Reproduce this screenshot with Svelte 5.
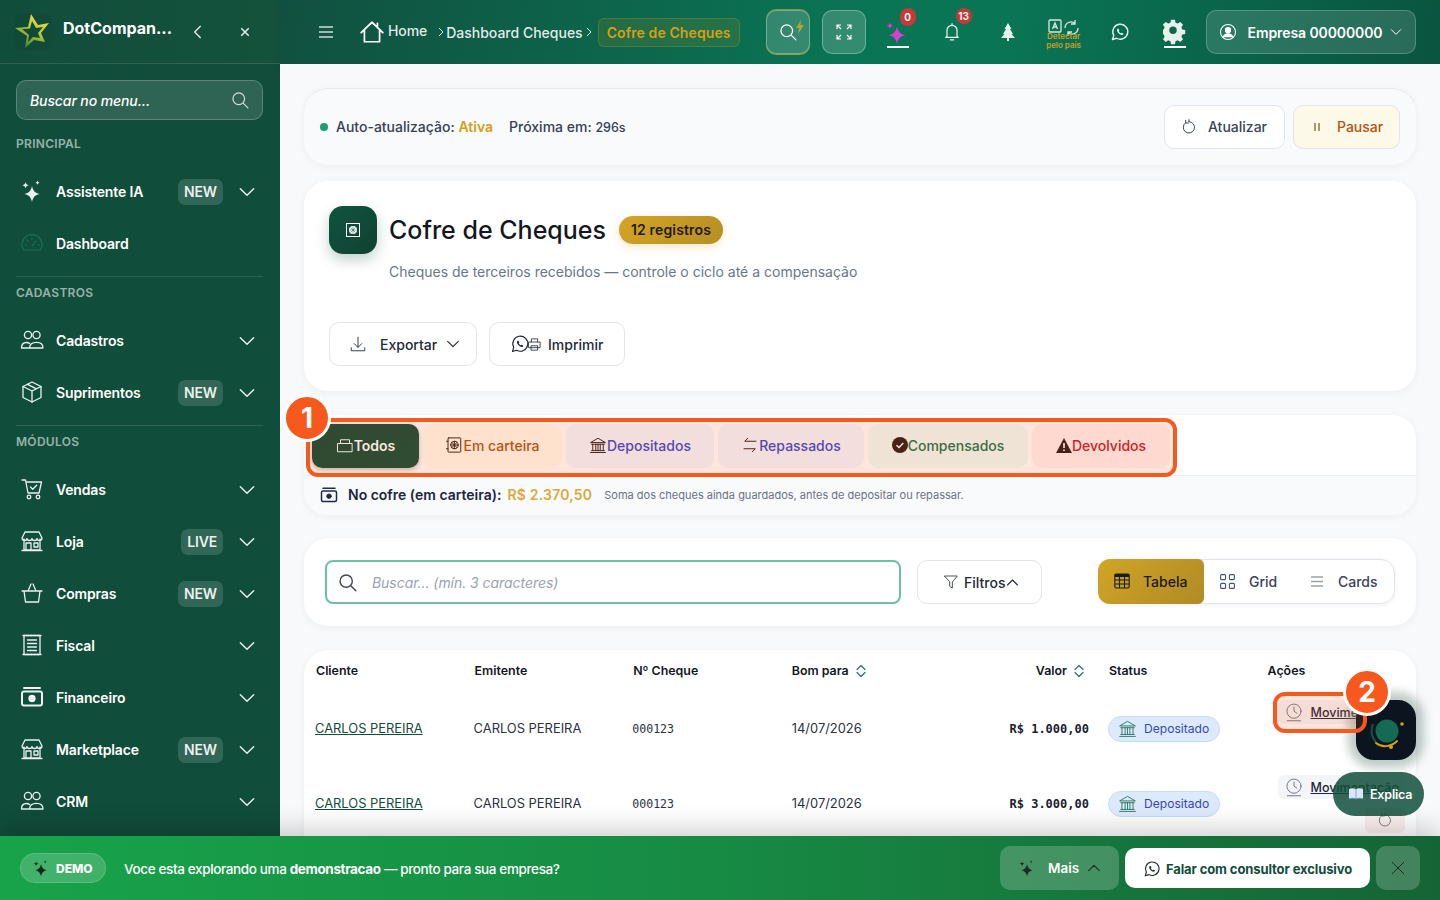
<script>
  const icons = {
    spark: '<path d="M12 7c1 4.700 3 7 7.500 8-4.500 1-6.500 3.300-7.500 8-1-4.700-3-7-7.500-8 4.500-1 6.500-3.300 7.500-8Z" fill="currentColor" stroke="none"/><path d="M5.500 3c.4 2 1.200 2.800 3.200 3.200-2 .4-2.800 1.200-3.200 3.200-.4-2-1.200-2.800-3.200-3.200 2-.4 2.800-1.200 3.200-3.200Z" fill="currentColor" stroke="none"/><path d="M17.500 1.500c.2 1.300.9 2 2.300 2.200-1.400.2-2.100.9-2.300 2.200-.2-1.300-.9-2-2.300-2.200 1.400-.2 2.100-.9 2.300-2.200Z" fill="currentColor" stroke="none"/>',
    gauge: '<path d="M3 18a10 10 0 1 1 18 0c-.4.7-1 1-1.800 1H4.800C4 19 3.400 18.700 3 18Z"/><path d="m12 15 4-5M5 14h1.500M18 14h1.500M12 7V8.500M7 9l1 1"/>',
    people: '<circle cx="8" cy="7" r="3.600"/><circle cx="16.500" cy="7" r="3.600"/><path d="M1.500 20c0-3.300 2-5.500 5-5.500 1.200 0 2.200.3 3 1M2 20h8M9.500 20c.2-3.500 3-5.700 7-5.700s6.500 2.200 6.500 5.700Z"/>',
    box: '<path d="m12 2 9 4.500v11L12 22l-9-4.500v-11Z"/><path d="m3 6.500 9 4.500 9-4.500M12 11v11M7.500 4.300l9 4.500"/>',
    cart: '<path d="M2 3h3.500L8 16h11l2.500-11H6"/><circle cx="9" cy="20" r="1.800"/><circle cx="18" cy="20" r="1.800"/><path d="m10.500 10 2.200 2.200 4-4"/>',
    store: '<path d="M4 10v11h16V10M2 21.500h20M5 3h14l3 6c0 1.500-1 2.500-2.500 2.500S17 10.500 17 9.500c0 1-1 2-2.500 2S12 10.500 12 9.500c0 1-1 2-2.500 2S7 10.500 7 9.500c0 1-1 2-2.500 2S2 10.500 2 9ZM6 14h5v7H6ZM14 14h4v4h-4Z"/>',
    basket: '<path d="M2 10h20M4 10l1.500 11h13L20 10M8 10l3-7M16 10l-3-7"/>',
    receipt: '<path d="M4 2.500h16v19H4Z"/><path d="M7.500 7h9M7.500 10.500h9M7.500 14h9M7.500 17.500h9"/><path d="M3 2.500h18M3 21.500h18" stroke-dasharray="2 1.500"/>',
    money: '<rect x="2" y="6.500" width="20" height="14" rx="2" stroke-width="2"/><circle cx="12" cy="13.500" r="3" fill="currentColor"/><path d="M4 3h16" stroke-width="2"/>',
    search: '<circle cx="10.500" cy="10.500" r="7"/><path d="m16 16 5.500 5.500"/>',
    home: '<path d="M2 12.500 12 3l10 9.500M5 10v11h14V10M17 4v3"/>',
    clock: '<circle cx="12" cy="11" r="8.500"/><path d="M12 6v5l3.500 2.500M4 22.500h16"/>',
    bank: '<path d="M2.500 8.500 12 3l9.500 5.500ZM3.500 11h17M5 11v8M9 11v8M12 11v8M15 11v8M19 11v8M3.500 19.500h17M2 22h20"/>',
    swap: '<path d="M20 7H5l4-4M4 17h15l-4 4"/>',
    chest: '<path d="M2.500 10h19v11h-19ZM6 10V5h12v5"/>',
    safe: '<rect x="4" y="2.500" width="17" height="19" rx="1"/><circle cx="12.500" cy="12" r="5"/><path d="M12.500 7v10M7.500 12h10M9 8.500l7 7M16 8.500l-7 7M2 7h2M2 17h2"/>',
    bell: '<path d="M6 17V10a6 6 0 1 1 12 0v7l1.500 1.500h-15ZM10 21.500h4M12 2v2"/>',
    wa: '<path d="M3 21l1.500-5A9 9 0 1 1 8 19.500Z"/><path d="M9 8c-1 1-.8 2.700.5 4.500s3.200 3 4.700 3c1 0 1.800-.7 1.800-1.500l-2-1.200-1 .8c-1-.4-2-1.400-2.500-2.600l.8-1L10 8Z" fill="currentColor" stroke="none"/>',
    user: '<circle cx="12" cy="12" r="10"/><circle cx="12" cy="9.500" r="3.500" fill="currentColor"/><path d="M5.500 19c1-3 3.500-4.500 6.500-4.500s5.500 1.500 6.500 4.500" fill="currentColor"/>',
    down: '<path d="M12 3v13M7 11.500l5 5 5-5M3 17v4h18v-4"/>',
    print: '<path d="M7 8V3h10v5M3 8h18v9H3ZM7 14h10v7H7Z"/>',
    funnel: '<path d="M2.500 3h19l-7.500 9v9l-4-2.500V12Z"/>',
    refresh: '<path d="M7 5.500a8.500 8.500 0 1 0 5-1.500M12 1v3M7 2v4h4"/>'
  };

  const chev = 'm4 8 8 8 8-8';

  const nav = [
    { section: 'PRINCIPAL' },
    { label: 'Assistente IA', icon: 'spark', tag: 'NEW' },
    { label: 'Dashboard', icon: 'gauge', dim: true, noChev: true },
    { section: 'CADASTROS', line: true },
    { label: 'Cadastros', icon: 'people' },
    { label: 'Suprimentos', icon: 'box', tag: 'NEW' },
    { section: 'MÓDULOS', line: true },
    { label: 'Vendas', icon: 'cart' },
    { label: 'Loja', icon: 'store', tag: 'LIVE' },
    { label: 'Compras', icon: 'basket', tag: 'NEW' },
    { label: 'Fiscal', icon: 'receipt' },
    { label: 'Financeiro', icon: 'money' },
    { label: 'Marketplace', icon: 'store', tag: 'NEW' },
    { label: 'CRM', icon: 'people' }
  ];

  const tabs = [
    { label: 'Todos', icon: 'chest', cls: 'todos' },
    { label: 'Em carteira', icon: 'safe', cls: 'carteira' },
    { label: 'Depositados', icon: 'bank', cls: 'depositados' },
    { label: 'Repassados', icon: 'swap', cls: 'repassados' },
    { label: 'Compensados', icon: 'check', cls: 'compensados' },
    { label: 'Devolvidos', icon: 'warn', cls: 'devolvidos' }
  ];

  const rows = [
    { cliente: 'CARLOS PEREIRA', emitente: 'CARLOS PEREIRA', numero: '000123', data: '14/07/2026', valor: 'R$ 1.000,00' },
    { cliente: 'CARLOS PEREIRA', emitente: 'CARLOS PEREIRA', numero: '000123', data: '14/07/2026', valor: 'R$ 3.000,00' }
  ];
</script>

{#snippet icon(name, size = 24, sw = 1.6)}
  <svg class="ico" width={size} height={size} viewBox="0 0 24 24" fill="none" stroke="currentColor" stroke-width={sw} stroke-linecap="round" stroke-linejoin="round">{@html icons[name]}</svg>
{/snippet}

{#snippet chevron(size = 18, up = false)}
  <svg class="ico" width={size} height={size} viewBox="0 0 24 24" fill="none" stroke="currentColor" stroke-width="1.700" stroke-linecap="round" stroke-linejoin="round"><path d={up ? 'm4 16 8-8 8 8' : chev} /></svg>
{/snippet}

{#snippet sortIcon()}
  <svg class="ico sort" width="12" height="14" viewBox="0 0 12 14" fill="none" stroke="currentColor" stroke-width="1.200" stroke-linecap="round" stroke-linejoin="round"><path d="M2 5.500 6 1.500l4 4M2 8.500l4 4 4-4" /></svg>
{/snippet}

<div class="app">
  <div class="shell">
    <aside class="sidebar">
      <div class="brand">
        <svg class="logo" width="38" height="38" viewBox="0 0 38 38">
          <defs>
            <linearGradient id="lg" x1="0.200" y1="1" x2="0.700" y2="0">
              <stop offset="0" stop-color="#2e7a3e" />
              <stop offset="0.550" stop-color="#b8c93a" />
              <stop offset="1" stop-color="#f0dc3c" />
            </linearGradient>
          </defs>
          <path fill="url(#lg)" fill-rule="evenodd" d="M17 1 24 12 35 10 27 20 31 29 20 27 11 35 13 23 1 15 14 14ZM18 8 16 15.500 8 16 15 22 14 29 19 24 26 25 24 20 29 14 22 15Z" />
        </svg>
        <span class="brand-name">DotCompan...</span>
        <svg class="ico back" width="16" height="16" viewBox="0 0 24 24" fill="none" stroke="currentColor" stroke-width="2"><path d="M16 3 7 12l9 9" /></svg>
        <svg class="ico close" width="10" height="10" viewBox="0 0 24 24" fill="none" stroke="currentColor" stroke-width="3.500"><path d="M3 3l18 18M21 3 3 21" /></svg>
      </div>

      <div class="side-body">
        <div class="menu-search">
          <span>Buscar no menu...</span>
          {@render icon('search', 20, 1.400)}
        </div>

        {#each nav as item}
          {#if item.section}
            {#if item.line}<hr class="rule" />{/if}
            <div class="section" class:first={!item.line}>{item.section}</div>
          {:else}
            <div class="nav-item">
              <span class="nav-ico" class:dim={item.dim}>{@render icon(item.icon, 24, item.dim ? 1.200 : 1.300)}</span>
              <span class="nav-label">{item.label}</span>
              {#if item.tag}<span class="tag">{item.tag}</span>{/if}
              {#if !item.noChev}<span class="nav-chev">{@render chevron(20)}</span>{/if}
            </div>
          {/if}
        {/each}
      </div>
    </aside>

    <div class="main">
      <header class="topbar">
        <svg class="ico burger" width="14" height="12" viewBox="0 0 14 12" stroke="currentColor" stroke-width="1.300"><path d="M0 1h14M0 6h14M0 11h14" /></svg>
        <span class="house">{@render icon('home', 26, 1.600)}</span>
        <span class="crumb home">Home</span>
        <span class="crumb-sep first">
          <svg class="ico" width="8" height="10" viewBox="0 0 8 10" fill="none" stroke="currentColor"><path d="m2 1 4 4-4 4" /></svg>
        </span>
        <span class="crumb">Dashboard Cheques</span>
        <span class="crumb-sep">
          <svg class="ico" width="8" height="10" viewBox="0 0 8 10" fill="none" stroke="currentColor"><path d="m2 1 4 4-4 4" /></svg>
        </span>
        <span class="crumb-current">Cofre de Cheques</span>

        <button class="square glow">
          {@render icon('search', 20, 1.500)}
          <svg class="bolt" width="8" height="14" viewBox="0 0 8 14"><path d="M5 0 0 8h3l-1 6 6-9H4.500Z" fill="#a5a83a" /></svg>
        </button>
        <button class="square second">
          <svg class="ico" width="18" height="18" viewBox="0 0 18 18" fill="none" stroke="currentColor" stroke-width="1.200"><path d="M2 6V2h4M2 2l4 4M16 6V2h-4M16 2l-4 4M2 12v4h4M2 16l4-4M16 12v4h-4M16 16l-4-4" /></svg>
        </button>

        <span class="slot first-slot">
          <svg class="ico magenta" width="26" height="26" viewBox="0 0 24 24">{@html icons.spark}</svg>
          <i class="bar"></i>
          <b class="count zero">0</b>
        </span>
        <span class="slot">
          {@render icon('bell', 20, 1.500)}
          <b class="count">13</b>
        </span>
        <span class="slot">
          <svg class="ico" width="14" height="18" viewBox="0 0 14 18" fill="currentColor"><path d="M7 0 10.500 6H9l3 5h-1.500L14 15H8v3H6v-3H0l3.500-4H2l3-5H3.500Z" /></svg>
        </span>
        <span class="slot translate">
          <svg class="ico" width="32" height="18" viewBox="0 0 32 18" fill="none" stroke="currentColor" stroke-width="1.300"><rect x="1" y="1" width="12" height="12" rx="1" /><path d="m4.500 10 2.500-6 2.500 6M5.500 8h3" /><path d="M17 9a6 6 0 0 1 10-4.500M30 9a6 6 0 0 1-10 4.500M27 1v4h-4M20 17v-4h4" /></svg>
          <em>Detectar<br />pelo país</em>
        </span>
        <span class="slot">{@render icon('wa', 20, 1.700)}</span>
        <span class="slot">
          <svg class="ico" width="26" height="26" viewBox="0 0 24 24" fill="currentColor" fill-rule="evenodd"><path d="m10 1.500h4l.6 3 2.200.9 2.600-1.700 2.800 2.800-1.700 2.600.9 2.200 3 .6v4l-3 .6-.9 2.200 1.700 2.600-2.800 2.800-2.600-1.700-2.200.9-.6 3h-4l-.6-3-2.200-.9-2.600 1.700-2.800-2.800 1.700-2.600-.9-2.200-3-.6v-4l3-.6.9-2.200-1.700-2.600 2.800-2.800 2.600 1.700 2.200-.9ZM12 8.500a3.800 3.800 0 1 0 0 7.600 3.800 3.800 0 0 0 0-7.600Z" transform="translate(-1.700 -.7) scale(.91)" /></svg>
          <i class="bar"></i>
        </span>

        <button class="company">
          {@render icon('user', 18, 1.400)}
          <span>Empresa 00000000</span>
          {@render chevron(14)}
        </button>
      </header>

      <main class="content">
        <section class="card refresh">
          <i class="dot"></i>
          <span class="auto">Auto-atualização: <b>Ativa</b></span>
          <span class="next">Próxima em: <span class="secs">296s</span></span>
          <button class="btn update">{@render icon('refresh', 16, 1.500)}<span>Atualizar</span></button>
          <button class="btn pause">
            <svg class="ico" width="8" height="10" viewBox="0 0 8 10" stroke="#6f5a1d" stroke-width="1.200"><path d="M2 1v8M6 1v8" /></svg>
            <span>Pausar</span>
          </button>
        </section>

        <section class="card title-card">
          <div class="title-row">
            <span class="title-ico">
              <svg width="16" height="16" viewBox="0 0 16 16" fill="none"><rect x="1.500" y="1.500" width="13" height="13" stroke="#fff" /><circle cx="8" cy="8" r="4" fill="#fff" /><path d="M8 4.500v7M4.500 8h7M5.500 5.500l5 5M10.500 5.500l-5 5" stroke="#114d3b" stroke-width=".5" /></svg>
            </span>
            <h1>Cofre de Cheques</h1>
            <span class="count-pill">12 registros</span>
          </div>
          <p class="subtitle">Cheques de terceiros recebidos — controle o ciclo até a compensação</p>
          <div class="title-actions">
            <button class="btn export">{@render icon('down', 18, 1.200)}<span>Exportar</span><span class="export-chev">{@render chevron(16)}</span></button>
            <button class="btn printbtn">
              <span class="pair">{@render icon('wa', 20, 1.400)}<span class="pair-print">{@render icon('print', 15, 1.300)}</span></span>
              <span>Imprimir</span>
            </button>
          </div>
        </section>

        <section class="card tabs-card">
          <div class="tabs">
            {#each tabs as t}
              <button class="tab {t.cls}">
                {#if t.icon === 'check'}
                  <svg class="ico" width="16" height="16" viewBox="0 0 16 16"><circle cx="8" cy="8" r="8" fill="#2a1a17" /><path d="m4.500 8.200 2.500 2.300 4.300-4.500" fill="none" stroke="#fff" stroke-width="1.500" /></svg>
                {:else if t.icon === 'warn'}
                  <svg class="ico warn" width="16" height="15" viewBox="0 0 16 15"><path d="M8 0 16 15H0Z" fill="#2a1a17" /><path d="M8 5v5M8 11.500v1.500" stroke="#fff" stroke-width="1.600" /></svg>
                {:else}
                  <span class="tab-ico">{@render icon(t.icon, 18, 1.300)}</span>
                {/if}
                <span>{t.label}</span>
              </button>
            {/each}
          </div>
          <div class="summary">
            <span class="sum-ico">{@render icon('money', 18, 1.200)}</span>
            <strong>No cofre (em carteira):</strong>
            <span class="amount">R$ 2.370,50</span>
            <small>Soma dos cheques ainda guardados, antes de depositar ou repassar.</small>
          </div>
          <div class="spot spot-one"></div>
          <span class="marker marker-one">1</span>
        </section>

        <section class="card filters">
          <div class="search-box">
            {@render icon('search', 21, 1.600)}
            <span>Buscar... (mín. 3 caracteres)</span>
          </div>
          <button class="btn filter">{@render icon('funnel', 16, 1.200)}<span>Filtros</span><span class="filter-chev">{@render chevron(15, true)}</span></button>
          <div class="views">
            <span class="view active">
              <svg class="ico" width="16" height="16" viewBox="0 0 16 16" fill="none" stroke="#1c1c1c" stroke-width="1.100"><rect x=".8" y="1" width="14.400" height="14" rx="1.500" /><path d="M.8 2.500h14.400" stroke-width="3" /><path d="M.8 7h14.400M.8 11h14.400M5.500 3v12M10.500 3v12" /></svg>
              Tabela
            </span>
            <span class="view grid">
              <svg class="ico" width="15" height="15" viewBox="0 0 15 15" fill="none" stroke="#4a5468" stroke-width="1.100"><rect x=".6" y=".6" width="5" height="5" rx="1" /><rect x="9.400" y=".6" width="5" height="5" rx="1" /><rect x=".6" y="9.400" width="5" height="5" rx="1" /><rect x="9.400" y="9.400" width="5" height="5" rx="1" /></svg>
              Grid
            </span>
            <span class="view cards">
              <svg class="ico" width="12" height="11" viewBox="0 0 12 11" stroke="#9aa0ac" stroke-width="1.400"><path d="M0 1h12M0 5.500h12M0 10h12" /></svg>
              Cards
            </span>
          </div>
        </section>

        <section class="card table-card">
          <div class="thead">
            <span>Cliente</span>
            <span>Emitente</span>
            <span>Nº Cheque</span>
            <span class="sorted">Bom para {@render sortIcon()}</span>
            <span class="sorted right">Valor {@render sortIcon()}</span>
            <span>Status</span>
            <span>Ações</span>
          </div>
          {#each rows as r}
            <div class="trow">
              <a class="client" href="#cliente">{r.cliente}</a>
              <span class="nudge">{r.emitente}</span>
              <span class="num nudge">{r.numero}</span>
              <span>{r.data}</span>
              <span class="valor">{r.valor}</span>
              <span class="nudge"><span class="status">{@render icon('bank', 19, 1.100)}<span>Depositado</span></span></span>
              <div class="acts">
                <span class="act-move">{@render icon('clock', 20, 1)}<u>Movimentação</u></span>
                <span class="act-undo">{@render icon('refresh', 16, 1)}</span>
              </div>
            </div>
          {/each}
        </section>
      </main>
    </div>
  </div>

  <footer class="demo">
    <span class="demo-pill">
      <span class="demo-spark">{@render icon('spark', 18, 1)}</span>
      DEMO
    </span>
    <p>Voce esta explorando uma <b>demonstracao</b> — pronto para sua empresa?</p>
    <button class="more"><span class="demo-spark">{@render icon('spark', 18, 1)}</span><span class="more-text">Mais</span>{@render chevron(16, true)}</button>
    <button class="talk">{@render icon('wa', 18, 1.500)}<span>Falar com consultor exclusivo</span></button>
    <button class="dismiss">
      <svg width="14" height="14" viewBox="0 0 14 14" stroke="#1f2d27" stroke-width="1"><path d="m1 1 12 12M13 1 1 13" /></svg>
    </button>
  </footer>

  <div class="spot spot-two"></div>
  <div class="mascot">
    <svg width="60" height="60" viewBox="0 0 60 60" fill="none">
      <circle cx="31" cy="31" r="11.500" fill="#156a55" />
      <path d="M17 24a16 16 0 0 0 3 18" stroke="#12584a" stroke-width="2" />
      <path d="M20 43c6 5 15 4 21-2" stroke="#d4a017" stroke-width="2" stroke-linecap="round" />
      <circle cx="35" cy="47" r="2" fill="#d4a017" />
      <circle cx="46" cy="24" r="1.800" fill="#d4a017" />
    </svg>
  </div>
  <span class="marker marker-two">2</span>
  <div class="explica">
    <svg width="14" height="12" viewBox="0 0 14 12"><path d="M0 1c2-1 5-1 7 0 2-1 5-1 7 0v10c-2-1-5-1-7 0-2-1-5-1-7 0Z" fill="#dce6f5" /><path d="M7 1v10" stroke="#7aa5d8" /><path d="M0 11c2-1 5-1 7 0 2-1 5-1 7 0" stroke="#5a8fd0" fill="none" /></svg>
    <span>Explica</span>
  </div>
</div>

<style>
  :global(body) {
    margin: 0;
    font-family: Inter, "Liberation Sans", sans-serif;
    background: #f8f9fb;
    color: #1f2937;
  }
  button {
    font: inherit;
    cursor: pointer;
  }
  .ico {
    display: block;
    flex: none;
  }
  .app {
    position: relative;
    display: flex;
    flex-direction: column;
    height: 100vh;
    overflow: hidden;
  }
  .shell {
    flex: 1;
    display: flex;
    min-height: 0;
  }

  /* sidebar */
  .sidebar {
    width: 280px;
    flex: none;
    background: #114d3b;
    color: #fff;
    overflow: hidden;
  }
  .brand {
    height: 63px;
    display: flex;
    align-items: center;
    border-bottom: 1px solid rgba(255, 255, 255, 0.12);
    background: linear-gradient(90deg, #114d3b, #15523c);
    padding-left: 14px;
  }
  .logo {
    margin-right: 11px;
    border-radius: 8px;
    background: rgba(0, 0, 0, 0.05);
  }
  .brand-name {
    width: 127px;
    margin-top: -7px;
    font-size: 16px;
    font-weight: 700;
    white-space: nowrap;
  }
  .back {
    opacity: 0.9;
  }
  .close {
    margin-left: 34px;
    opacity: 0.9;
  }
  .side-body {
    padding: 16px 17px 0 16px;
  }
  .menu-search {
    height: 38px;
    display: flex;
    align-items: center;
    justify-content: space-between;
    padding: 0 12px 0 13px;
    border: 1px solid rgba(255, 255, 255, 0.22);
    border-radius: 10px;
    background: rgba(255, 255, 255, 0.13);
    font-size: 14px;
    font-style: italic;
    font-weight: 500;
    letter-spacing: -0.1px;
    color: rgba(255, 255, 255, 0.8);
  }
  .menu-search span {
    color: #fff;
  }
  .section {
    height: 16px;
    line-height: 16px;
    margin: 8px 0 13px;
    font-size: 12px;
    font-weight: 600;
    letter-spacing: 0.3px;
    color: rgba(255, 255, 255, 0.58);
  }
  .section.first {
    margin-top: 16px;
  }
  .rule {
    margin: 7px 0 0;
    border: 0;
    border-top: 1px solid rgba(255, 255, 255, 0.12);
  }
  .nav-item {
    height: 52px;
    display: flex;
    align-items: center;
    font-size: 14px;
    font-weight: 600;
    letter-spacing: -0.15px;
  }
  .nav-ico {
    width: 40px;
    padding-left: 4px;
    box-sizing: border-box;
    color: rgba(255, 255, 255, 0.92);
  }
  .nav-ico.dim {
    color: #1c6f56;
  }
  .nav-label {
    flex: 1;
  }
  .tag {
    margin-top: 2px;
    padding: 0 6px;
    height: 26px;
    line-height: 26px;
    border-radius: 7px;
    background: rgba(255, 255, 255, 0.14);
    font-size: 14px;
    font-weight: 600;
    color: rgba(255, 255, 255, 0.92);
  }
  .nav-chev {
    margin: 2px 6px 0 14px;
    color: rgba(255, 255, 255, 0.92);
  }

  /* top bar */
  .main {
    flex: 1;
    min-width: 0;
    display: flex;
    flex-direction: column;
  }
  .topbar {
    height: 64px;
    flex: none;
    display: flex;
    align-items: center;
    padding-left: 39px;
    background: linear-gradient(100deg, #115040 0%, #0a7554 50%, #0a7554 62%, #0a5440 100%);
    box-shadow: 0 3px 8px rgba(0, 0, 0, 0.1);
    color: #fff;
    position: relative;
  }
  .burger {
    color: rgba(255, 255, 255, 0.8);
  }
  .house {
    margin-left: 26px;
    margin-right: 3px;
  }
  .crumb {
    font-size: 14px;
    font-weight: 500;
    color: rgba(255, 255, 255, 0.9);
    white-space: nowrap;
  }
  .crumb.home {
    margin-top: -4px;
    letter-spacing: -0.1px;
  }
  .crumb-sep {
    margin: 0 1px 0 2px;
    color: rgba(255, 255, 255, 0.85);
  }
  .crumb-sep.first {
    margin-left: 10px;
  }
  .crumb-current {
    margin-left: 4px;
    height: 27px;
    line-height: 27px;
    padding: 0 8px;
    border: 1px solid rgba(212, 160, 23, 0.25);
    border-radius: 6px;
    background: rgba(212, 160, 23, 0.12);
    font-size: 14px;
    font-weight: 600;
    letter-spacing: 0.1px;
    color: #d4a017;
    white-space: nowrap;
  }
  .square {
    position: relative;
    width: 44px;
    height: 44px;
    display: flex;
    align-items: center;
    justify-content: center;
    margin-left: 26px;
    border: 1px solid rgba(255, 255, 255, 0.3);
    border-radius: 10px;
    background: rgba(255, 255, 255, 0.17);
    color: #fff;
    padding: 0;
  }
  .square.second {
    margin-left: 12px;
  }
  .glow {
    box-shadow: 0 1px 0 #a59a3a, 0 -1px 0 #7f9a4a;
  }
  .bolt {
    position: absolute;
    top: 9px;
    right: 5px;
  }
  .slot {
    position: relative;
    width: 56px;
    height: 44px;
    display: flex;
    align-items: center;
    justify-content: center;
    color: #e6f0ec;
  }
  .first-slot {
    width: 53px;
    margin-left: 5px;
  }
  .magenta {
    color: #d63fd0;
  }
  .bar {
    position: absolute;
    left: 16px;
    width: 22px;
    bottom: 6px;
    height: 2px;
    background: #fff;
  }
  .count {
    position: absolute;
    top: -2px;
    left: 32px;
    min-width: 16px;
    height: 16px;
    line-height: 16px;
    padding: 0 1px;
    box-sizing: border-box;
    border-radius: 8px;
    background: #c43a3a;
    font-size: 10px;
    font-weight: 700;
    text-align: center;
  }
  .count.zero {
    left: 29px;
    height: 18px;
    line-height: 18px;
  }
  .translate {
    flex-direction: column;
    justify-content: flex-start;
    padding-top: 9px;
    box-sizing: border-box;
    color: #d9e8e2;
  }
  .translate em {
    margin-top: -5px;
    font-size: 8px;
    line-height: 9px;
    font-style: normal;
    font-weight: 600;
    text-align: center;
    color: #c9a227;
  }
  .company {
    width: 210px;
    height: 44px;
    margin-left: 2px;
    display: flex;
    align-items: center;
    padding: 0 12px;
    box-sizing: border-box;
    border: 1px solid rgba(255, 255, 255, 0.22);
    border-radius: 10px;
    background: rgba(255, 255, 255, 0.13);
    color: #fff;
    font-size: 14px;
    font-weight: 600;
  }
  .company span {
    flex: 1;
    text-align: left;
    margin-left: 11px;
    letter-spacing: -0.1px;
    white-space: nowrap;
  }

  /* content */
  .content {
    flex: 1;
    min-height: 0;
    padding: 24px;
    overflow: hidden;
    position: relative;
    background: #f8f9fb;
  }
  .card {
    background: #fff;
    border-radius: 24px;
    box-shadow: 0 2px 8px rgba(30, 40, 60, 0.05);
  }
  .btn {
    display: inline-flex;
    align-items: center;
    height: 44px;
    box-sizing: border-box;
    border: 1px solid #e2e4ec;
    border-radius: 10px;
    background: #fff;
    color: #1f2937;
    font-size: 14px;
    font-weight: 500;
    padding: 0;
  }
  .refresh {
    height: 77px;
    box-sizing: border-box;
    display: flex;
    align-items: center;
    padding: 0 16px 1px;
    background: #f9fafc;
    border-top: 1px solid #e8eaef;
    margin-bottom: 16px;
    font-size: 14px;
    font-weight: 500;
    color: #374151;
  }
  .dot {
    width: 8px;
    height: 8px;
    border-radius: 50%;
    background: #14a173;
    margin-right: 8px;
  }
  .auto b {
    font-weight: 600;
    color: #d4a017;
  }
  .next {
    flex: 1;
    margin-left: 16px;
  }
  .secs {
    font-size: 12.5px;
  }
  .update {
    width: 121px;
    gap: 11px;
    padding-left: 16px;
    color: #3b4458;
    margin-right: 8px;
  }
  .pause {
    width: 107px;
    gap: 16px;
    padding-left: 19px;
    background: #fdf9e9;
    color: #b4530e;
  }
  .title-card {
    height: 210px;
    box-sizing: border-box;
    padding: 25px 25px 0;
    margin-bottom: 24px;
  }
  .title-row {
    display: flex;
    align-items: center;
    height: 48px;
  }
  .title-ico {
    width: 48px;
    height: 48px;
    display: flex;
    align-items: center;
    justify-content: center;
    margin-right: 12px;
    border-radius: 14px;
    background: linear-gradient(135deg, #0f5540, #114030);
    box-shadow: 0 6px 14px rgba(17, 77, 59, 0.25);
  }
  h1 {
    margin: 0 13px 0 0;
    font-size: 25px;
    font-weight: 500;
    color: #14171f;
    white-space: nowrap;
  }
  .count-pill {
    height: 28px;
    line-height: 28px;
    padding: 0 12px;
    border-radius: 14px;
    background: linear-gradient(135deg, #d4a526, #b58f24);
    box-shadow: 0 3px 8px rgba(212, 165, 38, 0.25);
    font-size: 14px;
    font-weight: 600;
    letter-spacing: 0.15px;
    color: #1f1a10;
  }
  .subtitle {
    margin: 8px 0 0 60px;
    height: 20px;
    line-height: 20px;
    font-size: 14px;
    color: #6b7589;
  }
  .title-actions {
    display: flex;
    gap: 12px;
    margin-top: 40px;
  }
  .export {
    width: 148px;
    padding-left: 19px;
    gap: 13px;
  }
  .export-chev {
    margin-left: -5px;
  }
  .printbtn {
    width: 136px;
    padding-left: 20px;
    gap: 6px;
  }
  .pair {
    display: flex;
    align-items: center;
    color: #1f2937;
  }
  .pair-print {
    margin-left: -3px;
  }

  .tabs-card {
    position: relative;
    height: 100px;
    margin-bottom: 23px;
    background: #fff;
  }
  .tabs {
    height: 61px;
    box-sizing: border-box;
    display: flex;
    gap: 4px;
    padding: 9px 0 0 8px;
    border-bottom: 1px solid #eceef2;
  }
  .tab {
    height: 44px;
    display: flex;
    align-items: center;
    justify-content: center;
    border: 0;
    border-radius: 10px;
    font-size: 14px;
    font-weight: 500;
    padding: 0 0 2px;
  }
  .tab-ico {
    color: #2a1a17;
  }
  .tab.todos {
    width: 107px;
    background: linear-gradient(135deg, #0c4834, #0e4a38);
    box-shadow: 0 2px 5px rgba(0, 0, 0, 0.25);
    color: #fff;
    font-weight: 600;
  }
  .tab.todos .tab-ico {
    color: #fff;
  }
  .tab.carteira {
    width: 139px;
    background: #fffbee;
    color: #b4500f;
  }
  .tab.depositados {
    width: 148px;
    background: #f1f6ff;
    color: #3a46cc;
  }
  .tab.repassados {
    width: 146px;
    background: #f1f6ff;
    color: #3a46cc;
  }
  .tab.compensados {
    width: 160px;
    background: #eefcf6;
    color: #14724f;
  }
  .tab.devolvidos {
    width: 138px;
    background: #fef0f0;
    color: #c5162a;
  }
  .summary {
    height: 39px;
    box-sizing: border-box;
    padding: 0 0 2px 16px;
    display: flex;
    align-items: center;
    background: #f9fafc;
    border-radius: 0 0 24px 24px;
  }
  .sum-ico {
    color: #1f2a44;
    margin-right: 10px;
  }
  .summary strong {
    font-size: 14px;
    font-weight: 600;
    color: #1c2540;
    margin-right: 6px;
  }
  .amount {
    font-size: 14px;
    font-weight: 600;
    letter-spacing: 0.2px;
    color: #d8aa3a;
    margin-right: 12px;
  }
  .summary small {
    font-size: 11px;
    color: #6b7280;
  }
  .spot {
    position: absolute;
    box-sizing: border-box;
    border: 4px solid #f7581d;
    border-radius: 12px;
    background: rgba(247, 88, 29, 0.15);
    pointer-events: none;
  }
  .spot-one {
    left: 2px;
    top: 3px;
    width: 871px;
    height: 59px;
  }
  .spot-two {
    left: 1273px;
    top: 692px;
    width: 94px;
    height: 41px;
    z-index: 3;
  }
  .marker {
    position: absolute;
    width: 48px;
    height: 48px;
    box-sizing: border-box;
    display: flex;
    align-items: center;
    justify-content: center;
    border: 3px solid #fff;
    border-radius: 50%;
    background: #f7581d;
    color: #fff;
    font-size: 28px;
    font-weight: 700;
    z-index: 4;
  }
  .marker-one {
    left: -21px;
    top: -21px;
  }
  .marker-two {
    left: 1343px;
    top: 668px;
  }

  .filters {
    height: 88px;
    box-sizing: border-box;
    display: flex;
    align-items: center;
    padding: 0 21px;
    margin-bottom: 24px;
  }
  .search-box {
    width: 576px;
    height: 44px;
    box-sizing: border-box;
    display: flex;
    align-items: center;
    gap: 14px;
    padding-left: 10px;
    border: 2px solid #6fbfa5;
    border-radius: 8px;
    color: #3b4458;
  }
  .search-box span {
    font-size: 14px;
    font-style: italic;
    letter-spacing: -0.05px;
    color: #9aa1b0;
  }
  .filter {
    width: 125px;
    margin-left: 16px;
    padding-left: 25px;
    gap: 5px;
  }
  .filter-chev {
    margin-left: -5px;
  }
  .views {
    margin-left: 56px;
    margin-bottom: 2px;
    width: 297px;
    height: 45px;
    box-sizing: border-box;
    display: flex;
    align-items: center;
    border: 1px solid #e2e4ec;
    border-radius: 14px;
    box-shadow: 0 1px 4px rgba(30, 40, 60, 0.08);
    font-size: 14px;
    font-weight: 500;
    color: #3b4458;
  }
  .view {
    display: flex;
    align-items: center;
    height: 100%;
  }
  .view.active {
    width: 106px;
    box-sizing: border-box;
    padding-left: 16px;
    gap: 13px;
    margin: -1px 0 -1px -1px;
    height: 45px;
    border-radius: 12px 6px 6px 12px;
    background: linear-gradient(135deg, #d0a526, #b08a26);
    color: #1c1c1c;
  }
  .view.grid {
    width: 107px;
    padding-left: 16px;
    box-sizing: border-box;
    gap: 14px;
  }
  .view.cards {
    gap: 15px;
  }
  .table-card {
    height: 220px;
    padding: 0 12px;
    box-sizing: border-box;
  }
  .thead,
  .trow {
    display: grid;
    grid-template-columns: repeat(6, 158.6px) 1fr;
    align-items: center;
  }
  .thead {
    height: 41px;
    font-size: 12.4px;
    font-weight: 600;
    color: #14171f;
  }
  .sorted {
    display: flex;
    align-items: center;
    gap: 6px;
  }
  .sorted.right {
    justify-content: flex-end;
    padding-right: 24px;
  }
  .sort {
    color: #2f6f6a;
  }
  .trow {
    height: 75px;
    font-size: 12.9px;
    color: #2a3142;
  }
  .client {
    margin-left: -1px;
    color: #114d3b;
    text-decoration: underline;
    font-weight: 400;
  }
  .nudge {
    margin-left: -1px;
  }
  .num {
    font-family: "DejaVu Sans Mono", "Liberation Mono", monospace;
    font-size: 11.6px;
  }
  .valor {
    font-family: "DejaVu Sans Mono", "Liberation Mono", monospace;
    font-size: 12px;
    font-weight: 700;
    text-align: right;
    padding-right: 20px;
    color: #1c2130;
    white-space: nowrap;
  }
  .status {
    display: inline-flex;
    align-items: center;
    gap: 7px;
    height: 26px;
    padding: 0 10px 0 9px;
    box-sizing: border-box;
    border: 1px solid #c5ddf8;
    border-radius: 13px;
    background: #dceafb;
    font-size: 12.1px;
    color: #3a46b8;
    white-space: nowrap;
  }
  .status :global(svg) {
    color: #1f6f5c;
  }
  .acts {
    width: 127px;
    margin: 1px 0 0 10px;
    display: flex;
    flex-direction: column;
    align-items: flex-end;
    gap: 8px;
    font-size: 12.5px;
  }
  .act-move {
    width: 127px;
    height: 24px;
    box-sizing: border-box;
    display: flex;
    align-items: center;
    gap: 7px;
    padding-left: 6px;
    border-radius: 6px;
    background: #f4f5f8;
    color: #22283a;
    font-weight: 500;
    white-space: nowrap;
  }
  .act-move :global(svg) {
    color: #5c6270;
  }
  .act-undo {
    width: 40px;
    height: 26px;
    display: flex;
    align-items: center;
    justify-content: center;
    border-radius: 6px;
    background: #fbeeee;
    color: #3a4a44;
  }

  /* demo bar */
  .demo {
    position: relative;
    z-index: 2;
    height: 64px;
    flex: none;
    display: flex;
    align-items: center;
    padding: 0 20px;
    background: linear-gradient(90deg, #18a34a 0%, #178a44 50%, #156435 100%);
    box-shadow: 0 -8px 24px rgba(0, 0, 0, 0.18);
    color: #fff;
  }
  .demo-pill {
    width: 86px;
    height: 30px;
    box-sizing: border-box;
    display: flex;
    align-items: center;
    gap: 6px;
    padding-left: 11px;
    border: 1px solid rgba(255, 255, 255, 0.15);
    border-radius: 15px;
    background: rgba(255, 255, 255, 0.18);
    font-size: 12px;
    font-weight: 800;
  }
  .demo-spark {
    color: #17241c;
  }
  .demo p {
    flex: 1;
    margin: 1px 0 0 18px;
    font-size: 13.5px;
    font-weight: 500;
    letter-spacing: -0.37px;
    white-space: nowrap;
  }
  .demo p b {
    font-weight: 700;
  }
  .more {
    width: 119px;
    height: 44px;
    display: flex;
    align-items: center;
    padding: 0 0 0 18px;
    border: 0;
    border-radius: 10px;
    background: rgba(255, 255, 255, 0.2);
    color: #fff;
    font-size: 13.5px;
    font-weight: 600;
  }
  .more :global(svg:last-child) {
    color: #1f2d27;
  }
  .more-text {
    margin: 0 7px 0 12px;
  }
  .talk {
    width: 245px;
    height: 40px;
    margin-left: 6px;
    padding: 2px 0 0;
    display: flex;
    align-items: center;
    justify-content: center;
    gap: 5px;
    border: 0;
    border-radius: 10px;
    background: #fff;
    color: #114d3b;
    font-size: 13px;
    font-weight: 700;
    letter-spacing: -0.1px;
    white-space: nowrap;
  }
  .talk :global(svg) {
    color: #1f2d27;
  }
  .dismiss {
    width: 44px;
    height: 44px;
    margin-left: 6px;
    display: flex;
    align-items: center;
    justify-content: center;
    border: 0;
    border-radius: 10px;
    background: rgba(255, 255, 255, 0.2);
    padding: 0;
  }

  /* floating helpers */
  .mascot {
    position: absolute;
    left: 1356px;
    top: 700px;
    width: 60px;
    height: 60px;
    border-radius: 18px;
    background: #0c1420;
    box-shadow: 0 0 10px 8px rgba(110, 140, 130, 0.45);
    z-index: 2;
  }
  .explica {
    position: absolute;
    left: 1333px;
    top: 772px;
    width: 91px;
    height: 44px;
    box-sizing: border-box;
    display: flex;
    align-items: center;
    gap: 7px;
    padding-left: 16px;
    border-radius: 22px;
    background: rgba(17, 77, 59, 0.85);
    color: #fff;
    font-size: 12.5px;
    font-weight: 600;
    letter-spacing: -0.2px;
    z-index: 2;
  }
</style>
